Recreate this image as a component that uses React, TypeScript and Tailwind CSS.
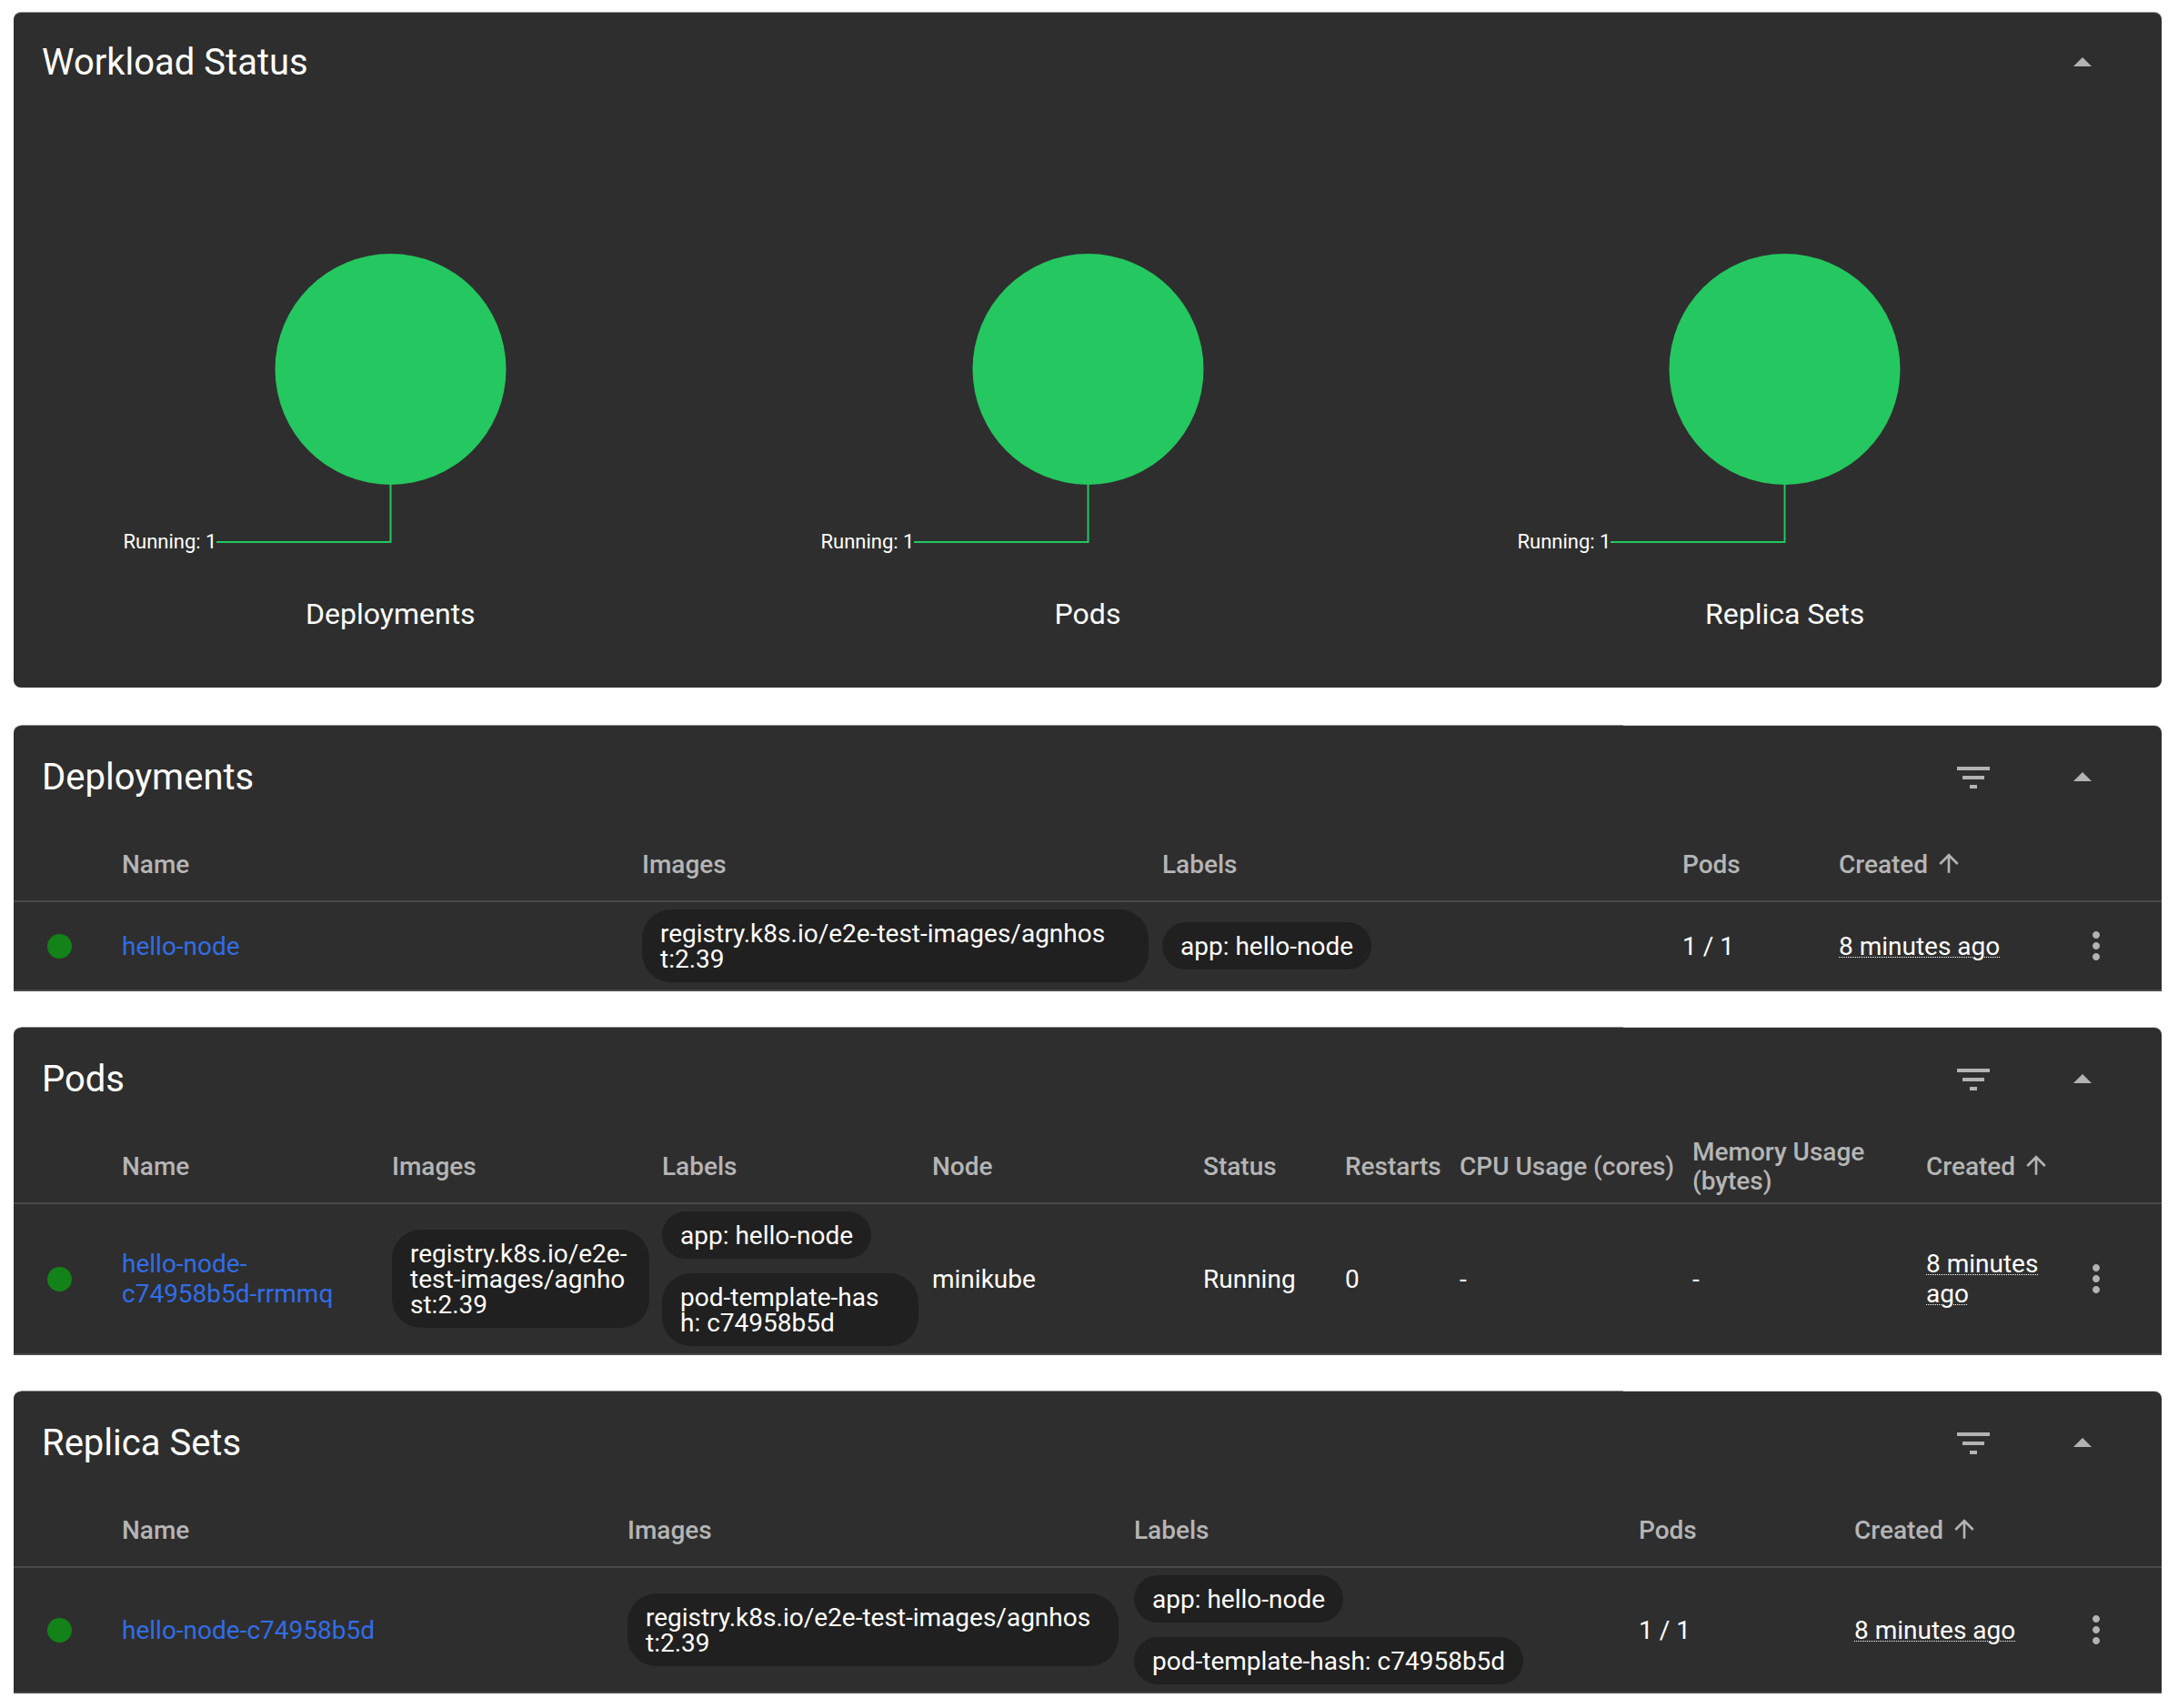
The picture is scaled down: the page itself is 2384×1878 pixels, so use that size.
const FILTER = "M10 18h4v-2h-4v2zM3 6v2h18V6H3zm3 7h12v-2H6v2z";
const CARET = "M7 14l5-5 5 5z";
const MORE = "M12 8c1.1 0 2-.9 2-2s-.9-2-2-2-2 .9-2 2 .9 2 2 2zm0 2c-1.1 0-2 .9-2 2s.9 2 2 2 2-.9 2-2-.9-2-2-2zm0 6c-1.1 0-2 .9-2 2s.9 2 2 2 2-.9 2-2-.9-2-2-2z";
const UP = "M4 12l1.41 1.41L11 7.83V20h2V7.83l5.58 5.59L20 12l-8-8-8 8z";

function Icon({ d, className }: { d: string; className: string }) {
  return (
    <svg viewBox="0 0 24 24" className={className} fill="#b3b3b3">
      <path d={d} />
    </svg>
  );
}

function Chip({ lines, width = "w-fit" }: { lines: string[]; width?: string }) {
  return (
    <div className={`${width} rounded-[32px] bg-[#202020] px-5 pt-[13px] pb-[11px] text-[28px] leading-[28px] whitespace-nowrap text-white`}>
      {lines.map((l) => (
        <div key={l}>{l}</div>
      ))}
    </div>
  );
}

function Ago() {
  return <span className="underline decoration-dotted decoration-1 underline-offset-2">8 minutes ago</span>;
}

function CardHeader({ title, filter = true }: { title: string; filter?: boolean }) {
  return (
    <div className={`flex h-[110px] items-center pl-[31px] text-[40px] text-white ${filter ? "pt-1" : ""}`}>
      <div className="flex-1">{title}</div>
      {filter && <Icon d={FILTER} className="mr-[72px] h-12 w-12" />}
      <Icon d={CARET} className="mr-[63px] h-12 w-12" />
    </div>
  );
}

function Head({ grid, cols }: { grid: string; cols: string[] }) {
  return (
    <div className={`grid h-[84px] items-center border-b-2 border-[#484848] pt-1 text-[28px] leading-[32px] font-medium text-[#b5b5b5] ${grid}`}>
      <div />
      {cols.map((c) =>
        c === "Created" ? (
          <div key={c} className="flex items-center gap-[7px]">
            {c}
            <Icon d={UP} className="mb-1 h-8 w-8" />
          </div>
        ) : (
          <div key={c}>{c}</div>
        ),
      )}
      <div />
    </div>
  );
}

function Row({ grid, children }: { grid: string; children: React.ReactNode }) {
  return (
    <div className={`grid items-center border-b-2 border-[#484848] py-2 text-[28px] leading-[33px] text-white ${grid}`}>
      <div className="flex justify-center pr-[19px]">
        <div className="h-[27px] w-[27px] rounded-full bg-[#138218]" />
      </div>
      {children}
      <Icon d={MORE} className="h-12 w-12" />
    </div>
  );
}

function Donut({ label }: { label: string }) {
  return (
    <div className="flex flex-col items-center">
      <svg viewBox="0 0 767 496" className="h-[496px] w-[767px]">
        <circle cx="383.5" cy="282" r="127" fill="#25c760" />
        <polyline points="383.5,409 383.5,472 192,472" fill="none" stroke="#25c760" strokeWidth="2" />
        <text x="192.5" y="479" textAnchor="end" fontSize="22" fill="#ffffff">
          Running: 1
        </text>
      </svg>
      <div className="mt-[35px] mb-[61px] text-[32px] leading-[40px] text-white">{label}</div>
    </div>
  );
}

function Card({ children }: { children: React.ReactNode }) {
  return (
    <section className="rounded-t-lg bg-[#2e2e2e] shadow-[0_-1px_0_#d4d4d4]">
      <div className="ml-2 -mt-px h-px w-[1762px] bg-[#8a8a8a]" />
      {children}
    </section>
  );
}

const DEPLOY = "grid-cols-[119px_572px_572px_572px_172px_259px_48px]";
const PODS = "grid-cols-[119px_297px_297px_297px_298px_156px_126px_256px_257px_163px_48px]";
const REPLICA = "grid-cols-[119px_556px_557px_555px_237px_242px_48px]";
const IMG = ["registry.k8s.io/e2e-test-images/agnhos", "t:2.39"];

export default function App() {
  return (
    <div className="flex min-h-[1878px] flex-col gap-[40px] bg-white pt-[14px] pr-[7px] pb-[15px] pl-[15px] [font-family:Roboto,sans-serif]">
      <section className="mb-[2px] rounded-lg bg-[#2e2e2e] shadow-[0_-1px_0_#9a9a9a]">
        <CardHeader title="Workload Status" filter={false} />
        <div className="grid grid-cols-3 px-[31px]">
          <Donut label="Deployments" />
          <Donut label="Pods" />
          <Donut label="Replica Sets" />
        </div>
      </section>

      <Card>
        <CardHeader title="Deployments" />
        <Head grid={DEPLOY} cols={["Name", "Images", "Labels", "Pods", "Created"]} />
        <Row grid={DEPLOY}>
          <a className="text-[#326de6]">hello-node</a>
          <Chip lines={IMG} width="w-[557px]" />
          <Chip lines={["app: hello-node"]} />
          <div>1 / 1</div>
          <div>
            <Ago />
          </div>
        </Row>
      </Card>

      <Card>
        <CardHeader title="Pods" />
        <Head grid={PODS} cols={["Name", "Images", "Labels", "Node", "Status", "Restarts", "CPU Usage (cores)", "Memory Usage (bytes)", "Created"]} />
        <Row grid={PODS}>
          <a className="pr-[40px] text-[#326de6]">hello-node-c74958b5d-rrmmq</a>
          <Chip lines={["registry.k8s.io/e2e-", "test-images/agnho", "st:2.39"]} width="w-[283px]" />
          <div className="flex flex-col gap-4">
            <Chip lines={["app: hello-node"]} />
            <Chip lines={["pod-template-has", "h: c74958b5d"]} width="w-[282px]" />
          </div>
          <div>minikube</div>
          <div>Running</div>
          <div>0</div>
          <div>-</div>
          <div>-</div>
          <div>
            <Ago />
          </div>
        </Row>
      </Card>

      <Card>
        <CardHeader title="Replica Sets" />
        <Head grid={REPLICA} cols={["Name", "Images", "Labels", "Pods", "Created"]} />
        <Row grid={REPLICA}>
          <a className="text-[#326de6]">hello-node-c74958b5d</a>
          <Chip lines={IMG} width="w-[540px]" />
          <div className="flex flex-col gap-4">
            <Chip lines={["app: hello-node"]} />
            <Chip lines={["pod-template-hash: c74958b5d"]} />
          </div>
          <div>1 / 1</div>
          <div>
            <Ago />
          </div>
        </Row>
      </Card>
    </div>
  );
}
